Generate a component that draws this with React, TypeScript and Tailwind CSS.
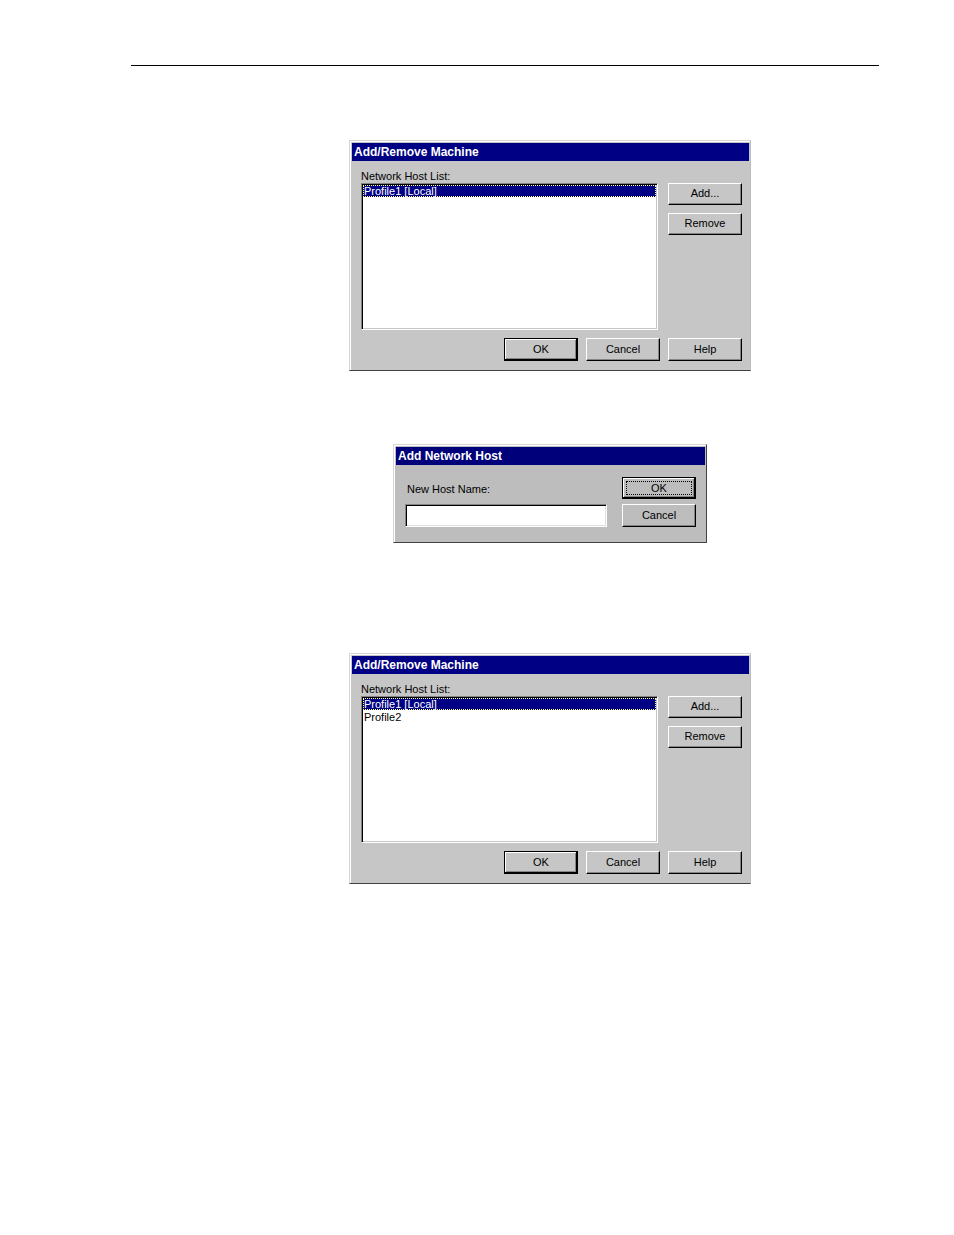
import { useState, type ReactNode } from "react";
import clsx from "clsx";

const raised =
  "border border-t-white border-l-white border-r-black border-b-black shadow-[inset_-1px_-1px_#848484]";
const raisedDefault =
  "border border-black shadow-[inset_-1px_-1px_#000000,inset_1px_1px_#ffffff,inset_-2px_-2px_#848484]";
const sunken =
  "border border-t-[#848484] border-l-[#848484] border-r-white border-b-white bg-white";

type ButtonProps = {
  children: ReactNode;
  isDefault?: boolean;
  focused?: boolean;
  short?: boolean;
};

function DialogButton({ children, isDefault, focused, short }: ButtonProps) {
  return (
    <button
      type="button"
      className={clsx(
        "flex w-[74px] shrink-0 p-[3px] text-[11px] leading-3 text-black",
        short ? "h-[22px]" : "h-[23px]",
        isDefault ? raisedDefault : raised
      )}
    >
      <span
        className={clsx(
          "flex h-full w-full items-center justify-center",
          focused ? "border border-dotted border-black" : "pb-[2px]"
        )}
      >
        {children}
      </span>
    </button>
  );
}

type DialogProps = {
  title: string;
  className: string;
  titleClassName: string;
  children: ReactNode;
};

function Dialog({ title, className, titleClassName, children }: DialogProps) {
  return (
    <section
      aria-label={title}
      className={clsx(
        "w-full border border-t-[#d6d6d6] border-l-[#d6d6d6] border-b-[#424242] pt-[2px] pr-px pl-[2px] shadow-[inset_1px_1px_#ffffff]",
        className
      )}
    >
      <h2 className={clsx("h-[18px] px-[2px] text-xs leading-[18px] font-bold text-white", titleClassName)}>
        {title}
      </h2>
      {children}
    </section>
  );
}

function HostListDialog({ id, hosts }: { id: string; hosts: string[] }) {
  const [selected, setSelected] = useState(hosts[0]);

  return (
    <Dialog
      title="Add/Remove Machine"
      className="max-w-[402px] border-r-[#bdbdbd] bg-[#c6c6c6]"
      titleClassName="bg-[#000084]"
    >
      <div className="pt-2 pr-[7px] pb-[9px] pl-[9px]">
        <div id={id} className="text-[11px] leading-[14px]">
          Network Host List:
        </div>
        <div className="flex gap-[10px]">
          <ul
            role="listbox"
            aria-labelledby={id}
            className={clsx(
              "flex h-[147px] flex-1 flex-col gap-px p-px text-[11px] leading-[10px] shadow-[inset_1px_1px_#000000,inset_-1px_-1px_#c6c6c6]",
              sunken
            )}
          >
            {hosts.map((host) => (
              <li
                key={host}
                role="option"
                aria-selected={host === selected}
                onClick={() => setSelected(host)}
                className={clsx(
                  "h-3 border border-dotted",
                  host === selected
                    ? "border-[#ffff7b] bg-[#000084] text-white"
                    : "border-transparent"
                )}
              >
                {host}
              </li>
            ))}
          </ul>
          <div className="flex flex-col gap-2">
            <DialogButton short>Add...</DialogButton>
            <DialogButton short>Remove</DialogButton>
          </div>
        </div>
        <div className="mt-2 flex justify-end gap-2">
          <DialogButton isDefault>OK</DialogButton>
          <DialogButton>Cancel</DialogButton>
          <DialogButton>Help</DialogButton>
        </div>
      </div>
    </Dialog>
  );
}

function AddHostDialog() {
  return (
    <Dialog
      title="Add Network Host"
      className="max-w-[314px] border-r-[#424242] bg-[#bdbdbd]"
      titleClassName="bg-[#00007b]"
    >
      <div className="flex gap-[15px] pt-3 pr-[9px] pb-[15px] pl-[9px]">
        <div className="flex min-w-0 flex-1 flex-col">
          <label htmlFor="host-name" className="mb-[3px] pl-[2px] text-[11px] leading-6">
            New Host Name:
          </label>
          <input
            id="host-name"
            type="text"
            className={clsx(
              "h-[23px] w-full px-1 text-[11px] shadow-[inset_1px_1px_#000000,inset_-1px_-1px_#dedede] outline-none",
              sunken
            )}
          />
        </div>
        <div className="flex flex-col gap-[5px]">
          <DialogButton isDefault focused short>
            OK
          </DialogButton>
          <DialogButton>Cancel</DialogButton>
        </div>
      </div>
    </Dialog>
  );
}

export default function App() {
  return (
    <main className="min-h-screen bg-white pt-[65px] pr-[75px] pb-16 pl-[131px] font-['Liberation_Sans',Arial,sans-serif] text-black">
      <hr className="border-t border-black" />
      <div className="flex flex-col items-center pt-[74px] pl-[90px]">
        <HostListDialog id="hosts-before" hosts={["Profile1 [Local]"]} />
        <div className="flex w-full justify-center pt-[73px] pb-[110px]">
          <AddHostDialog />
        </div>
        <HostListDialog id="hosts-after" hosts={["Profile1 [Local]", "Profile2"]} />
      </div>
    </main>
  );
}
